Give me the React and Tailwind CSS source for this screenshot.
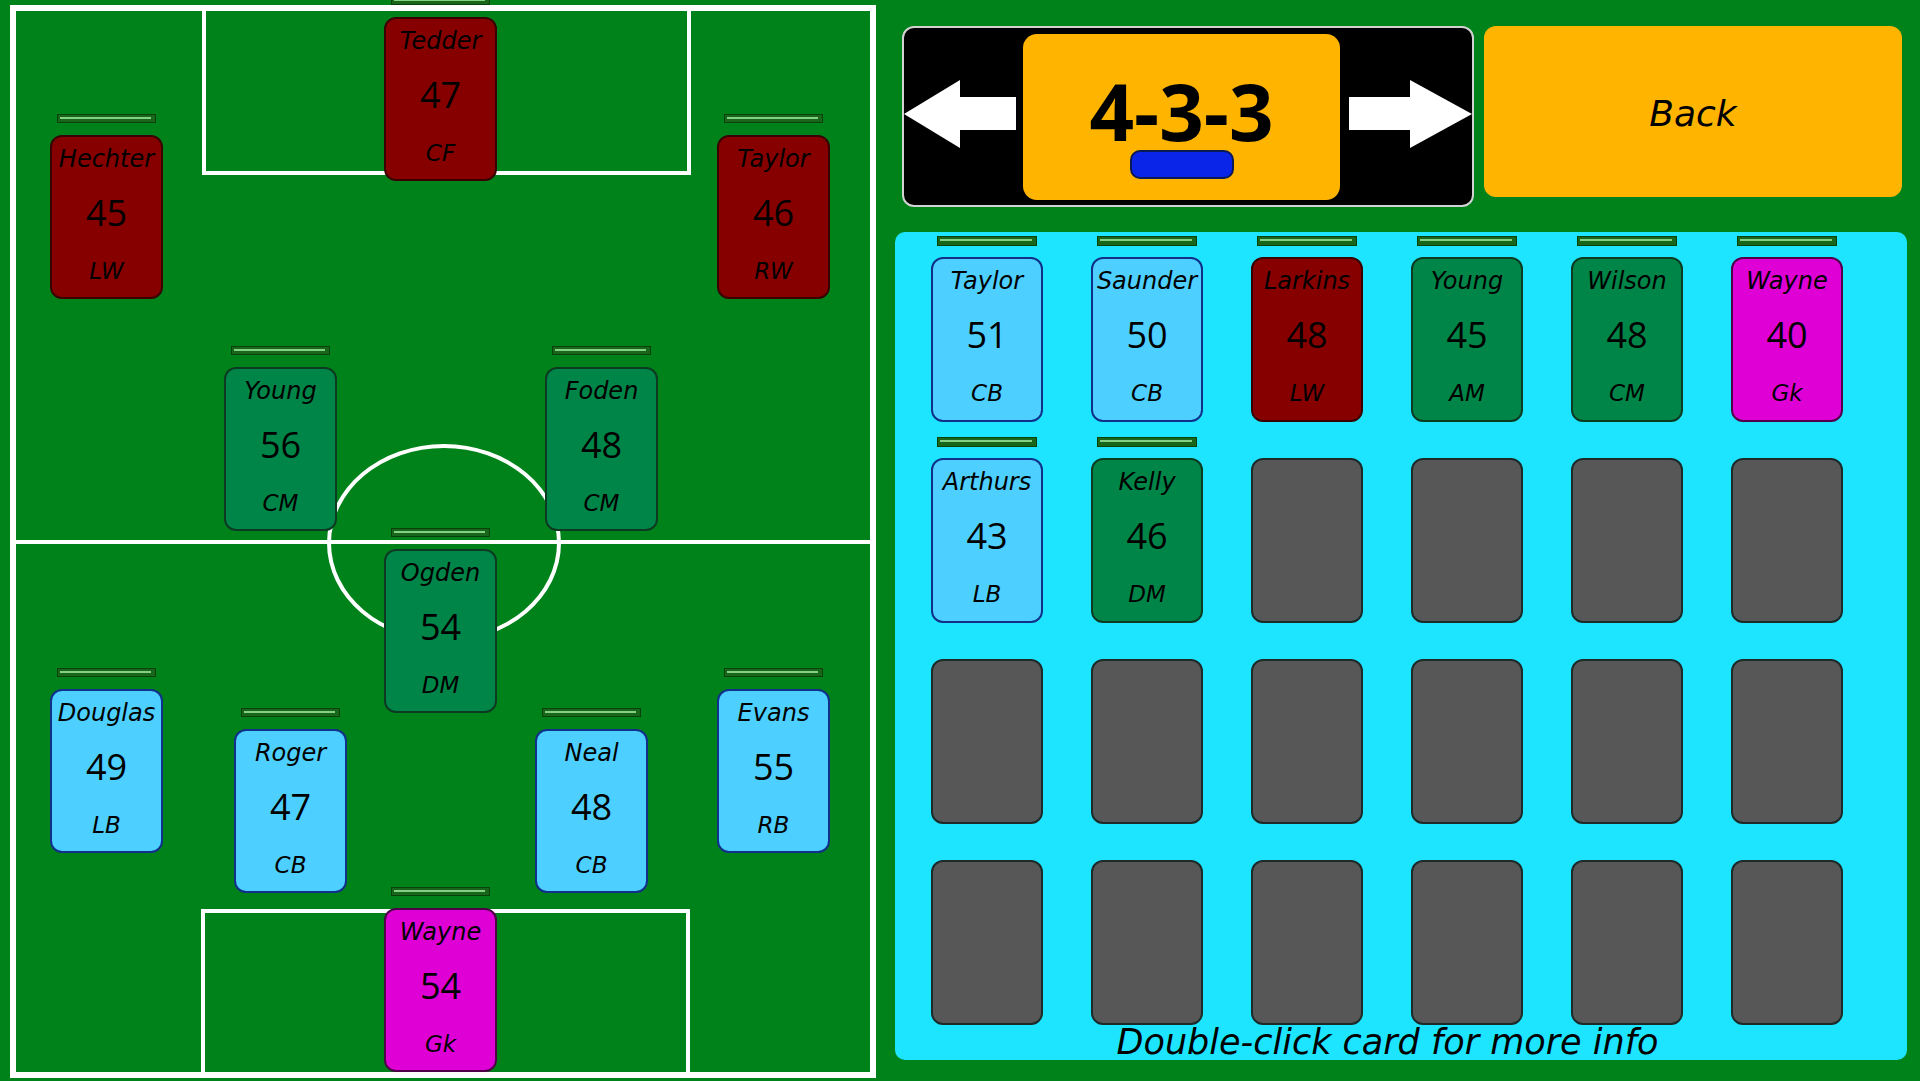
import React from "react";

const cardColors = {
  red: "bg-[#870000] border-[#3a0000]",
  green: "bg-[#008548] border-[#0c3b22]",
  blue: "bg-[#4dd0ff] border-[#10308a]",
  pink: "bg-[#de00d5] border-[#4f0049]",
  empty: "bg-[#575757] border-[#1c2a2a]",
};

const pitchPlayers = [
  { name: "Tedder", rating: 47, pos: "CF", type: "red", place: "left-[374px] top-[-9px]" },
  { name: "Hechter", rating: 45, pos: "LW", type: "red", place: "left-[40px] top-[109px]" },
  { name: "Taylor", rating: 46, pos: "RW", type: "red", place: "left-[707px] top-[109px]" },
  { name: "Young", rating: 56, pos: "CM", type: "green", place: "left-[214px] top-[341px]" },
  { name: "Foden", rating: 48, pos: "CM", type: "green", place: "left-[535px] top-[341px]" },
  { name: "Ogden", rating: 54, pos: "DM", type: "green", place: "left-[374px] top-[523px]" },
  { name: "Douglas", rating: 49, pos: "LB", type: "blue", place: "left-[40px] top-[663px]" },
  { name: "Roger", rating: 47, pos: "CB", type: "blue", place: "left-[224px] top-[703px]" },
  { name: "Neal", rating: 48, pos: "CB", type: "blue", place: "left-[525px] top-[703px]" },
  { name: "Evans", rating: 55, pos: "RB", type: "blue", place: "left-[707px] top-[663px]" },
  { name: "Wayne", rating: 54, pos: "Gk", type: "pink", place: "left-[374px] top-[882px]" },
];

const benchPlayers = [
  { name: "Taylor", rating: 51, pos: "CB", type: "blue" },
  { name: "Saunder", rating: 50, pos: "CB", type: "blue" },
  { name: "Larkins", rating: 48, pos: "LW", type: "red" },
  { name: "Young", rating: 45, pos: "AM", type: "green" },
  { name: "Wilson", rating: 48, pos: "CM", type: "green" },
  { name: "Wayne", rating: 40, pos: "Gk", type: "pink" },
  { name: "Arthurs", rating: 43, pos: "LB", type: "blue" },
  { name: "Kelly", rating: 46, pos: "DM", type: "green" },
];

const slots = Array.from({ length: 24 }, (_, i) => benchPlayers[i] || null);

const comic = "font-['DejaVu_Sans',sans-serif] italic text-black";

const StaminaBar = ({ wide }) => (
  <div
    className={`${wide ? "w-[100px] h-[10px]" : "w-[99px] h-[9px]"} border border-[#0a400a] bg-[#17661a] flex flex-col`}
  >
    <div className="ml-[2px] mr-[4px] mt-[2px] h-[1.5px] bg-[#86cf86]" />
  </div>
);

const Card = ({ player, size }) => {
  const type = player ? player.type : "empty";
  return (
    <div
      className={`${size} ${cardColors[type]} border-2 rounded-[12px] flex flex-col items-center`}
    >
      {player && (
        <>
          <div className={`h-[44px] flex items-center justify-center text-[24px] ${comic}`}>
            {player.name}
          </div>
          <div className="h-[64px] flex items-center justify-center font-['Open_Sans',sans-serif] text-[36px] leading-none text-black">
            {player.rating}
          </div>
          <div className={`h-[52px] flex items-center justify-center text-[23px] ${comic}`}>
            {player.pos}
          </div>
        </>
      )}
    </div>
  );
};

const Pitch = () => (
  <div className="relative ml-[10px] mt-[5px] w-[866px] h-[1073px] shrink-0">
    <div className="absolute inset-0 border-[6px] border-white" />
    <div className="absolute left-[192px] top-0 w-[489px] h-[170px] border-4 border-t-0 border-white" />
    <div className="absolute left-[191px] bottom-0 w-[489px] h-[169px] border-4 border-b-0 border-white" />
    <div className="absolute left-0 right-0 top-[535px] h-[4px] bg-white" />
    <div className="absolute left-[317px] top-[439px] w-[234px] h-[198px] rounded-[50%] border-4 border-white" />

    {pitchPlayers.map((p) => (
      <div key={p.name + p.pos} className={`absolute ${p.place} w-[113px] flex flex-col items-center`}>
        <StaminaBar />
        <div className="mt-[12px]">
          <Card player={p} size="w-[113px] h-[164px]" />
        </div>
      </div>
    ))}
  </div>
);

const LeftArrow = () => (
  <svg width="112" height="68" viewBox="0 0 112 68" className="shrink-0 mb-[6px]">
    <polygon points="0,34 56,0 56,17 112,17 112,50 56,50 56,68" fill="#ffffff" />
  </svg>
);

const RightArrow = () => (
  <svg width="123" height="68" viewBox="0 0 123 68" className="shrink-0 mb-[6px]">
    <polygon points="0,17 61,17 61,0 123,34 61,68 61,50 0,50" fill="#ffffff" />
  </svg>
);

const FormationPicker = () => (
  <div className="ml-[7px] w-[572px] h-[181px] shrink-0 bg-black border-2 border-[#d2d2d2] rounded-[12px] flex items-center overflow-hidden">
    <LeftArrow />
    <div className="ml-[7px] w-[317px] h-[166px] shrink-0 bg-[#ffb500] rounded-[14px] flex flex-col items-center pt-[38px]">
      <div className="font-['Open_Sans',sans-serif] font-bold text-[78px] leading-none text-black">
        4-3-3
      </div>
      <div className="mt-[0px] w-[104px] h-[29px] bg-[#0a24e8] border-2 border-[#0b1a55] rounded-[10px]" />
    </div>
    <div className="ml-[9px]">
      <RightArrow />
    </div>
  </div>
);

export default function App() {
  return (
    <div className="w-[1920px] h-[1081px] bg-[#00821a] flex overflow-hidden">
      <Pitch />

      <div className="ml-[19px] w-[1012px] flex flex-col shrink-0">
        <div className="mt-[26px] flex items-start">
          <FormationPicker />
          <button className="ml-[10px] w-[418px] h-[171px] bg-[#ffb500] rounded-[12px] flex items-center justify-center pt-[5px]">
            <span className={`text-[36px] ${comic}`}>Back</span>
          </button>
        </div>

        <div className="mt-[25px] h-[828px] rounded-[10px] bg-[#1ee5ff] pl-[36px] pt-[4px]">
          <div className="w-[913px]">
            <div className="grid grid-cols-[repeat(6,112px)] gap-x-[48px] gap-y-[15px]">
              {slots.map((p, i) => (
                <div key={i} className="flex flex-col items-center">
                  <div className="h-[21px]">{p && <StaminaBar wide />}</div>
                  <Card player={p} size="w-[112px] h-[165px]" />
                </div>
              ))}
            </div>
            <div className={`text-center text-[35px] leading-none ${comic}`}>
              Double-click card for more info
            </div>
          </div>
        </div>
      </div>
    </div>
  );
}
